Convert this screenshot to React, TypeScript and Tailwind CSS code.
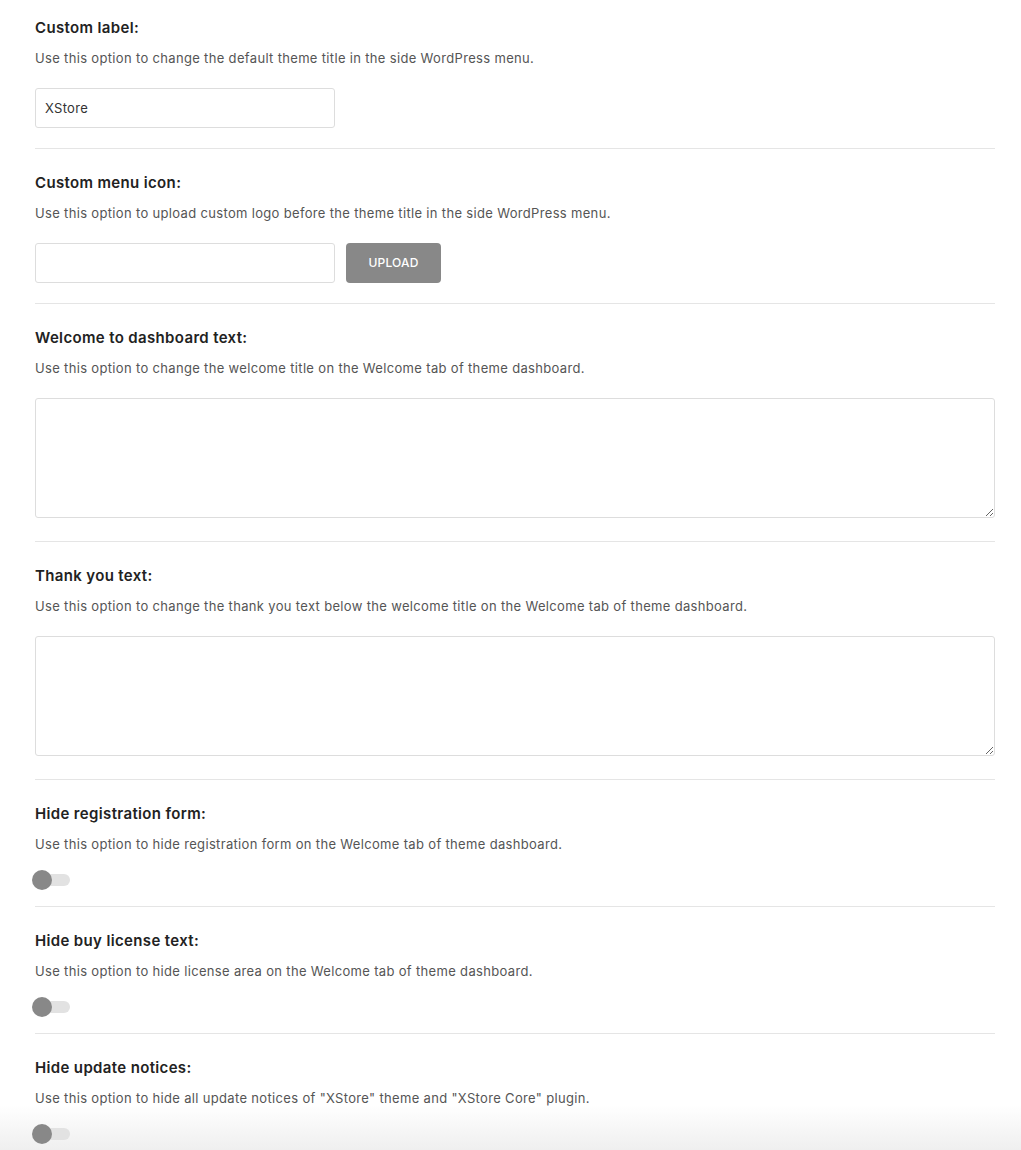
import React from "react";

function Title({ children }: { children: React.ReactNode }) {
  return (
    <h3 className="text-[15px] leading-[20px] font-semibold tracking-[0.35px] text-[#222]">{children}</h3>
  );
}

function Desc({ children }: { children: React.ReactNode }) {
  return (
    <p className="mt-[10px] text-[13px] leading-[20px] tracking-[0.33px] text-[#555]">{children}</p>
  );
}

function Toggle() {
  return (
    <div className="relative mt-[16px] h-[20px] w-[35px]">
      <div className="absolute left-0 top-[4px] h-[12px] w-[35px] rounded-full bg-[#e2e2e2]" />
      <div className="absolute left-[-3px] top-0 h-[20px] w-[20px] rounded-full bg-[#888]" />
    </div>
  );
}

function TextArea() {
  return (
    <textarea
      className="mt-[20px] block h-[120px] w-full rounded-[3px] border border-[#ddd] bg-white p-2 text-[13px] outline-none"
      defaultValue=""
    />
  );
}

export default function App() {
  return (
    <div
      className="relative h-[1150px] overflow-hidden bg-white"
      style={{ fontFamily: "Inter, 'Noto Sans', sans-serif" }}
    >
      <div className="pointer-events-none absolute bottom-0 left-0 right-0 z-0 h-[45px] bg-gradient-to-b from-white to-[#efefef]" />
      <div className="relative z-10 pl-[35px] pr-[26px]">
        <section className="border-b border-[#e5e5e5] pt-[18px] pb-[20px]">
          <Title>Custom label:</Title>
          <Desc>Use this option to change the default theme title in the side WordPress menu.</Desc>
          <input
            className="mt-[20px] block h-[40px] w-[300px] rounded-[3px] border border-[#ddd] bg-white px-[9px] text-[13px] tracking-[0.3px] text-[#333] outline-none"
            defaultValue="XStore"
          />
        </section>

        <section className="border-b border-[#e5e5e5] pt-[24px] pb-[20px]">
          <Title>Custom menu icon:</Title>
          <Desc>Use this option to upload custom logo before the theme title in the side WordPress menu.</Desc>
          <div className="mt-[20px] flex items-center gap-[11px]">
            <input
              className="block h-[40px] w-[300px] rounded-[3px] border border-[#ddd] bg-white px-[9px] text-[13px] outline-none"
              defaultValue=""
            />
            <button className="h-[40px] w-[95px] rounded-[4px] bg-[#888] text-[12px] font-medium tracking-[0.2px] text-white">
              UPLOAD
            </button>
          </div>
        </section>

        <section className="border-b border-[#e5e5e5] pt-[24px] pb-[23px]">
          <Title>Welcome to dashboard text:</Title>
          <Desc>Use this option to change the welcome title on the Welcome tab of theme dashboard.</Desc>
          <TextArea />
        </section>

        <section className="border-b border-[#e5e5e5] pt-[24px] pb-[23px]">
          <Title>Thank you text:</Title>
          <Desc>
            Use this option to change the thank you text below the welcome title on the Welcome tab of theme dashboard.
          </Desc>
          <TextArea />
        </section>

        <section className="border-b border-[#e5e5e5] pt-[24px] pb-[16px]">
          <Title>Hide registration form:</Title>
          <Desc>Use this option to hide registration form on the Welcome tab of theme dashboard.</Desc>
          <Toggle />
        </section>

        <section className="border-b border-[#e5e5e5] pt-[24px] pb-[16px]">
          <Title>Hide buy license text:</Title>
          <Desc>Use this option to hide license area on the Welcome tab of theme dashboard.</Desc>
          <Toggle />
        </section>

        <section className="pt-[24px] pb-[16px]">
          <Title>Hide update notices:</Title>
          <Desc>Use this option to hide all update notices of "XStore" theme and "XStore Core" plugin.</Desc>
          <Toggle />
        </section>
      </div>
    </div>
  );
}
